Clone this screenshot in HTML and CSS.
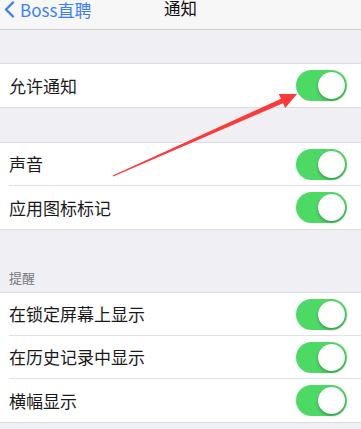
FILE: index.html
```html
<!DOCTYPE html>
<html>
<head>
<meta charset="utf-8">
<link rel="stylesheet" href="styles.css">
</head>
<body>
<div class="page">
  <div class="nav">
    <div class="back">
      <svg class="chev" width="12" height="17" viewBox="0 0 12 17"><path d="M10 1.5 L3 8.5 L10 15.5" fill="none" stroke="#3c82f6" stroke-width="2.4" stroke-linecap="round" stroke-linejoin="round"/></svg>
      <span class="back-text">Boss直聘</span>
    </div>
    <div class="title">通知</div>
    <div class="spacer"></div>
  </div>

  <div class="gap gap1"></div>
  <div class="group">
    <div class="row"><span class="label">允许通知</span><span class="toggle"><span class="knob"></span></span></div>
  </div>

  <div class="gap gap2"></div>
  <div class="group">
    <div class="row sep"><span class="label">声音</span><span class="toggle"><span class="knob"></span></span></div>
    <div class="row"><span class="label">应用图标标记</span><span class="toggle"><span class="knob"></span></span></div>
  </div>

  <div class="gap gap3"><span class="header">提醒</span></div>
  <div class="group">
    <div class="row sep"><span class="label">在锁定屏幕上显示</span><span class="toggle"><span class="knob"></span></span></div>
    <div class="row sep"><span class="label">在历史记录中显示</span><span class="toggle"><span class="knob"></span></span></div>
    <div class="row"><span class="label">横幅显示</span><span class="toggle"><span class="knob"></span></span></div>
  </div>
  <div class="gap rest"></div>

  <svg class="arrow" width="361" height="429" viewBox="0 0 361 429">
    <polygon points="112.7,175.4 281.0,98.7 278.8,94.1 297,94 285.2,107.9 283.0,103.3 113.3,176.6" fill="#fb3a3a"/>
  </svg>
</div>
</body>
</html>
```

FILE: styles.css
```css
* { box-sizing: border-box; }
html, body {
  margin: 0;
  padding: 0;
  background: #efeff4;
}
body {
  font-family: "Noto Sans CJK SC", "Noto Sans", sans-serif;
  color: #111;
}
.page {
  position: relative;
  width: 361px;
  height: 429px;
  overflow: hidden;
}
.nav {
  height: 30px;
  background: #f7f7f8;
  border-bottom: 1px solid #cfcfd3;
  display: grid;
  grid-template-columns: 1fr auto 1fr;
  align-items: start;
}
.back {
  display: flex;
  align-items: center;
  gap: 5px;
  padding-left: 3px;
  margin-top: 1px;
}
.chev { display: block; }
.back-text {
  font-family: "Noto Sans CJK SC", sans-serif;
  font-size: 17px;
  line-height: 17px;
  color: #3c82f6;
}
.title {
  font-size: 16.5px;
  line-height: 17px;
  color: #111;
}
.gap { background: #efeff4; }
.gap1 { height: 33px; }
.gap2 { height: 34px; }
.gap3 {
  height: 62px;
  display: flex;
  align-items: flex-end;
  padding: 0 0 6px 9px;
}
.header {
  font-size: 13px;
  line-height: 16px;
  color: #7a7a7f;
}
.rest { height: 20px; }
.group {
  background: #fff;
  border-top: 1px solid #dcdce0;
  border-bottom: 1px solid #dcdce0;
}
.row {
  height: 43px;
  display: flex;
  align-items: center;
  justify-content: space-between;
  padding: 0 14px 0 9px;
}
.row.sep {
  border-bottom: 1px solid #e2e2e6;
  margin-left: 9px;
  padding-left: 0;
}
.label {
  font-size: 17px;
  line-height: 20px;
  color: #1a1a1a;
}
.toggle {
  width: 51px;
  height: 31px;
  border-radius: 16px;
  background: #4cd964;
  position: relative;
  flex: none;
}
.knob {
  position: absolute;
  right: 2px;
  top: 2px;
  width: 27px;
  height: 27px;
  border-radius: 50%;
  background: #fff;
  box-shadow: 0 2px 3px rgba(0,0,0,0.25), 0 0 1px rgba(0,0,0,0.2);
}
.arrow {
  position: absolute;
  left: 0;
  top: 0;
  pointer-events: none;
}
```
